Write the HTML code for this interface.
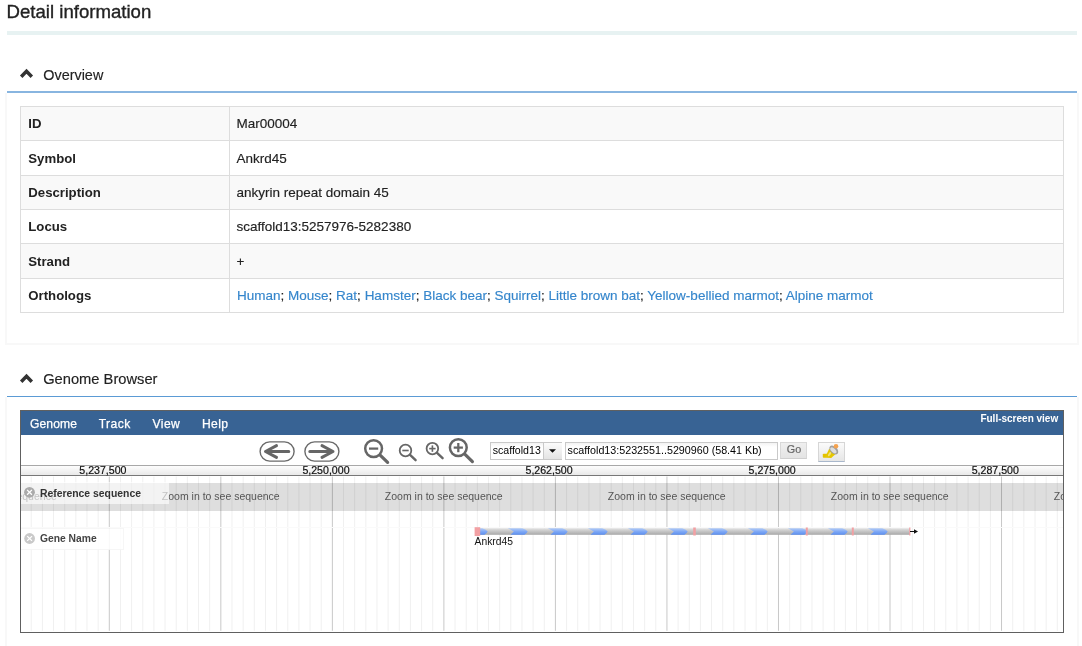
<!DOCTYPE html>
<html><head><meta charset="utf-8"><style>
html,body{margin:0;padding:0;background:#fff;width:1082px;height:646px;overflow:hidden;position:relative}
body{font-family:"Liberation Sans",sans-serif}
.t{position:absolute;white-space:pre}
.r{position:absolute}
</style></head><body>
<div class="t " style="left:6.60px;top:-0.70px;font-size:18.6px;line-height:25px;font-weight:400;color:#222;-webkit-text-stroke:0.35px #222">Detail information</div>
<div class="r" style="left:7px;top:31px;width:1070px;height:4px;background:#e7f2f2"></div>
<svg class="r" style="left:18.5px;top:67.4px" width="16" height="12" viewBox="0 0 16 12"><polyline points="2.2,9.8 7.5,4.3 12.8,9.8" fill="none" stroke="#333" stroke-width="3.4" stroke-linecap="butt" stroke-linejoin="miter"/></svg>
<div class="t " style="left:43.30px;top:66.30px;font-size:14.4px;line-height:19px;font-weight:400;color:#222;-webkit-text-stroke:0.15px #222">Overview</div>
<div class="r" style="left:7px;top:91px;width:1070px;height:2px;background:#88b5e0"></div>
<div class="r" style="left:5px;top:93px;width:2px;height:252px;background:#f8f8f8"></div>
<div class="r" style="left:1077px;top:93px;width:2px;height:252px;background:#f8f8f8"></div>
<div class="r" style="left:5px;top:343px;width:1074px;height:2px;background:#f8f8f8"></div>
<div class="r" style="left:20px;top:106px;width:1044px;height:34px;background:#f9f9f9"></div>
<div class="r" style="left:20px;top:106px;width:1044px;height:1px;background:#dddddd"></div>
<div class="t " style="left:28.30px;top:115.20px;font-size:13.2px;line-height:18px;font-weight:700;color:#222;">ID</div>
<div class="t " style="left:236.50px;top:115.30px;font-size:13.5px;line-height:18px;font-weight:400;color:#222;-webkit-text-stroke:0.15px #222">Mar00004</div>
<div class="r" style="left:20px;top:140px;width:1044px;height:1px;background:#dddddd"></div>
<div class="t " style="left:28.30px;top:149.53px;font-size:13.2px;line-height:18px;font-weight:700;color:#222;">Symbol</div>
<div class="t " style="left:236.50px;top:149.63px;font-size:13.5px;line-height:18px;font-weight:400;color:#222;-webkit-text-stroke:0.15px #222">Ankrd45</div>
<div class="r" style="left:20px;top:175px;width:1044px;height:34px;background:#f9f9f9"></div>
<div class="r" style="left:20px;top:175px;width:1044px;height:1px;background:#dddddd"></div>
<div class="t " style="left:28.30px;top:183.87px;font-size:13.2px;line-height:18px;font-weight:700;color:#222;">Description</div>
<div class="t " style="left:236.50px;top:183.97px;font-size:13.5px;line-height:18px;font-weight:400;color:#222;-webkit-text-stroke:0.15px #222">ankyrin repeat domain 45</div>
<div class="r" style="left:20px;top:209px;width:1044px;height:1px;background:#dddddd"></div>
<div class="t " style="left:28.30px;top:218.20px;font-size:13.2px;line-height:18px;font-weight:700;color:#222;">Locus</div>
<div class="t " style="left:236.50px;top:218.30px;font-size:13.5px;line-height:18px;font-weight:400;color:#222;-webkit-text-stroke:0.15px #222">scaffold13:5257976-5282380</div>
<div class="r" style="left:20px;top:243px;width:1044px;height:35px;background:#f9f9f9"></div>
<div class="r" style="left:20px;top:243px;width:1044px;height:1px;background:#dddddd"></div>
<div class="t " style="left:28.30px;top:252.53px;font-size:13.2px;line-height:18px;font-weight:700;color:#222;">Strand</div>
<div class="t " style="left:236.50px;top:252.63px;font-size:13.5px;line-height:18px;font-weight:400;color:#222;-webkit-text-stroke:0.15px #222">+</div>
<div class="r" style="left:20px;top:278px;width:1044px;height:1px;background:#dddddd"></div>
<div class="t " style="left:28.30px;top:286.87px;font-size:13.2px;line-height:18px;font-weight:700;color:#222;">Orthologs</div>
<div class="t " style="left:237.00px;top:286.97px;font-size:13.5px;line-height:18px;font-weight:400;color:#222;-webkit-text-stroke:0.15px currentColor"><span style="color:#3586cc;-webkit-text-stroke:0.15px #3586cc">Human</span>; <span style="color:#3586cc;-webkit-text-stroke:0.15px #3586cc">Mouse</span>; <span style="color:#3586cc;-webkit-text-stroke:0.15px #3586cc">Rat</span>; <span style="color:#3586cc;-webkit-text-stroke:0.15px #3586cc">Hamster</span>; <span style="color:#3586cc;-webkit-text-stroke:0.15px #3586cc">Black bear</span>; <span style="color:#3586cc;-webkit-text-stroke:0.15px #3586cc">Squirrel</span>; <span style="color:#3586cc;-webkit-text-stroke:0.15px #3586cc">Little brown bat</span>; <span style="color:#3586cc;-webkit-text-stroke:0.15px #3586cc">Yellow-bellied marmot</span>; <span style="color:#3586cc;-webkit-text-stroke:0.15px #3586cc">Alpine marmot</span></div>
<div class="r" style="left:20px;top:312px;width:1044px;height:1px;background:#dddddd"></div>
<div class="r" style="left:20px;top:106px;width:1px;height:207px;background:#dddddd"></div>
<div class="r" style="left:1063px;top:106px;width:1px;height:207px;background:#dddddd"></div>
<div class="r" style="left:229px;top:106px;width:1px;height:207px;background:#dddddd"></div>
<svg class="r" style="left:18.5px;top:371.9px" width="16" height="12" viewBox="0 0 16 12"><polyline points="2.2,9.8 7.5,4.3 12.8,9.8" fill="none" stroke="#333" stroke-width="3.4" stroke-linecap="butt" stroke-linejoin="miter"/></svg>
<div class="t " style="left:43.20px;top:369.10px;font-size:14.7px;line-height:20px;font-weight:400;color:#222;-webkit-text-stroke:0.15px #222">Genome Browser</div>
<div class="r" style="left:7px;top:396px;width:1070px;height:1px;background:#5b9bd5"></div>
<div class="r" style="left:5px;top:397px;width:2px;height:249px;background:#f8f8f8"></div>
<div class="r" style="left:1077px;top:397px;width:2px;height:249px;background:#f8f8f8"></div>
<div class="r" style="left:20px;top:410px;width:1042px;height:221px;border:1px solid #606060;background:#fff;overflow:hidden">
<div class="r" style="left:0px;top:0px;width:1042px;height:24px;background:#386394"></div>
<div class="t " style="left:9.00px;top:4.70px;font-size:12.1px;line-height:16px;font-weight:400;color:#fff;letter-spacing:0.1px;-webkit-text-stroke:0.25px #fff">Genome</div>
<div class="t " style="left:77.70px;top:4.70px;font-size:12.1px;line-height:16px;font-weight:400;color:#fff;letter-spacing:0.45px;-webkit-text-stroke:0.25px #fff">Track</div>
<div class="t " style="left:131.60px;top:4.70px;font-size:12.1px;line-height:16px;font-weight:400;color:#fff;letter-spacing:0.4px;-webkit-text-stroke:0.25px #fff">View</div>
<div class="t " style="left:181.00px;top:4.70px;font-size:12.1px;line-height:16px;font-weight:400;color:#fff;letter-spacing:0.35px;-webkit-text-stroke:0.25px #fff">Help</div>
<div class="t " style="left:959.40px;top:1.30px;font-size:10.0px;line-height:13px;font-weight:700;color:#fff;">Full-screen view</div>
<div class="r" style="left:0px;top:54px;width:1042px;height:11px;background:linear-gradient(#fdfdfd,#e9e9e9);border-top:1px solid #a8a8a8;border-bottom:1px solid #777;box-sizing:border-box"></div>
<div class="t " style="left:58.30px;top:52.00px;font-size:10.6px;line-height:14px;font-weight:400;color:#111;-webkit-text-stroke:0.2px #111">5,237,500</div>
<div class="t " style="left:281.40px;top:52.00px;font-size:10.6px;line-height:14px;font-weight:400;color:#111;-webkit-text-stroke:0.2px #111">5,250,000</div>
<div class="t " style="left:504.50px;top:52.00px;font-size:10.6px;line-height:14px;font-weight:400;color:#111;-webkit-text-stroke:0.2px #111">5,262,500</div>
<div class="t " style="left:727.60px;top:52.00px;font-size:10.6px;line-height:14px;font-weight:400;color:#111;-webkit-text-stroke:0.2px #111">5,275,000</div>
<div class="t " style="left:950.70px;top:52.00px;font-size:10.6px;line-height:14px;font-weight:400;color:#111;-webkit-text-stroke:0.2px #111">5,287,500</div>
<svg class="r" style="left:-21px;top:-411px;overflow:visible" width="1082" height="646"><rect x="260.09999999999997" y="441.9" width="34" height="19.2" rx="9.6" ry="9.6" fill="#fff" stroke="#6a6a6a" stroke-width="1.4"/><rect x="304.9" y="441.9" width="34" height="19.2" rx="9.6" ry="9.6" fill="#fff" stroke="#6a6a6a" stroke-width="1.4"/><path d="M288.8 451.5 H266 M276.5 445.6 L265.5 451.5 L276.5 457.4" fill="none" stroke="#666" stroke-width="3" stroke-linecap="round" stroke-linejoin="round"/><path d="M309.8 451.5 H332.5 M322 445.6 L333 451.5 L322 457.4" fill="none" stroke="#666" stroke-width="3" stroke-linecap="round" stroke-linejoin="round"/><circle cx="373.6" cy="448.6" r="8.4" fill="none" stroke="#666" stroke-width="2.5"/><line x1="380.12" y1="455.02" x2="387.6" y2="462.4" stroke="#666" stroke-width="3.2" stroke-linecap="round"/><line x1="369.0" y1="448.6" x2="378.20000000000005" y2="448.6" stroke="#666" stroke-width="2.25"/><circle cx="405.5" cy="450.5" r="5.8" fill="none" stroke="#666" stroke-width="1.8"/><line x1="410.07" y1="454.89" x2="415.6" y2="460.2" stroke="#666" stroke-width="2.4" stroke-linecap="round"/><line x1="402.3" y1="450.5" x2="408.7" y2="450.5" stroke="#666" stroke-width="1.62"/><circle cx="432.4" cy="448.6" r="5.8" fill="none" stroke="#666" stroke-width="1.8"/><line x1="437.02" y1="452.95" x2="442.6" y2="458.2" stroke="#666" stroke-width="2.4" stroke-linecap="round"/><line x1="429.2" y1="448.6" x2="435.59999999999997" y2="448.6" stroke="#666" stroke-width="1.62"/><line x1="432.4" y1="445.40000000000003" x2="432.4" y2="451.8" stroke="#666" stroke-width="1.62"/><circle cx="458.3" cy="447.6" r="8.4" fill="none" stroke="#666" stroke-width="2.5"/><line x1="464.79" y1="454.05" x2="472.4" y2="461.6" stroke="#666" stroke-width="3.2" stroke-linecap="round"/><line x1="453.7" y1="447.6" x2="462.90000000000003" y2="447.6" stroke="#666" stroke-width="2.25"/><line x1="458.3" y1="443.0" x2="458.3" y2="452.20000000000005" stroke="#666" stroke-width="2.25"/></svg>
<div class="r" style="left:469px;top:31px;width:72px;height:18px;box-sizing:border-box;border:1px solid #c9c9c9;background:linear-gradient(#f3f3f3,#fff 4px)"></div>
<div class="r" style="left:522px;top:32px;width:18px;height:16px;background:linear-gradient(#fcfcfc,#e4e4e4);border-left:1px solid #c9c9c9"></div>
<svg class="r" style="left:527px;top:37px" width="9" height="6"><path d="M1 1.2 H8 L4.5 4.8 Z" fill="#111"/></svg>
<div class="t " style="left:471.70px;top:32.00px;font-size:10.6px;line-height:14px;font-weight:400;color:#000;">scaffold13</div>
<div class="r" style="left:544px;top:31px;width:213px;height:18px;box-sizing:border-box;border:1px solid #c9c9c9;background:linear-gradient(#f3f3f3,#fff 4px)"></div>
<div class="t " style="left:546.60px;top:32.00px;font-size:10.72px;line-height:14px;font-weight:400;color:#000;">scaffold13:5232551..5290960 (58.41 Kb)</div>
<div class="r" style="left:759px;top:31px;width:27px;height:17px;box-sizing:border-box;border:1px solid #d8d8d8;border-bottom-color:#cfcfcf;background:linear-gradient(#efefef,#e4e4e4)"></div>
<div class="t " style="left:765.80px;top:31.10px;font-size:10.8px;line-height:15px;font-weight:400;color:#666;-webkit-text-stroke:0.2px #666">Go</div>
<div class="r" style="left:797px;top:31px;width:27px;height:20px;box-sizing:border-box;border:1px solid #d6d6d6;border-bottom-color:#a9b8cc;background:linear-gradient(#fbfbfb,#e6e6e6)"></div>
<svg class="r" style="left:-21px;top:-411px;overflow:visible" width="1082" height="646"><rect x="822.8" y="453.8" width="8.4" height="4" rx="0.8" fill="#e2c200"/><path d="M825.3 456.8 L829.2 448.8 L836.2 453.6 L831.2 458 Z" fill="#e5c700"/><ellipse cx="829.6" cy="454.2" rx="2.4" ry="1.1" transform="rotate(-55 829.6 454.2)" fill="#f2e07a"/><ellipse cx="833.8" cy="450" rx="5.3" ry="3.4" transform="rotate(45 833.8 450)" fill="#a0a0a0"/><ellipse cx="833.4" cy="450.4" rx="3.8" ry="2.0" transform="rotate(45 833.4 450.4)" fill="#dedede"/><ellipse cx="836" cy="446.3" rx="2.3" ry="2.3" fill="#f5a24e"/></svg>
<div class="r" style="left:0px;top:72px;width:1042px;height:27.6px;background:#dedede"></div>
<svg class="r" style="left:-21px;top:-411px;overflow:visible" width="1082" height="646"><line x1="31.23" y1="476.5" x2="31.23" y2="630.8" stroke="#f0f0f0" stroke-width="1" style="mix-blend-mode:multiply"/><line x1="42.38" y1="476.5" x2="42.38" y2="630.8" stroke="#f0f0f0" stroke-width="1" style="mix-blend-mode:multiply"/><line x1="53.53" y1="476.5" x2="53.53" y2="630.8" stroke="#f0f0f0" stroke-width="1" style="mix-blend-mode:multiply"/><line x1="64.69" y1="476.5" x2="64.69" y2="630.8" stroke="#f0f0f0" stroke-width="1" style="mix-blend-mode:multiply"/><line x1="75.84" y1="476.5" x2="75.84" y2="630.8" stroke="#f0f0f0" stroke-width="1" style="mix-blend-mode:multiply"/><line x1="86.99" y1="476.5" x2="86.99" y2="630.8" stroke="#f0f0f0" stroke-width="1" style="mix-blend-mode:multiply"/><line x1="98.15" y1="476.5" x2="98.15" y2="630.8" stroke="#f0f0f0" stroke-width="1" style="mix-blend-mode:multiply"/><line x1="109.30" y1="476.5" x2="109.30" y2="630.8" stroke="#c8c8c8" stroke-width="1" style="mix-blend-mode:multiply"/><line x1="120.45" y1="476.5" x2="120.45" y2="630.8" stroke="#f0f0f0" stroke-width="1" style="mix-blend-mode:multiply"/><line x1="131.61" y1="476.5" x2="131.61" y2="630.8" stroke="#f0f0f0" stroke-width="1" style="mix-blend-mode:multiply"/><line x1="142.76" y1="476.5" x2="142.76" y2="630.8" stroke="#f0f0f0" stroke-width="1" style="mix-blend-mode:multiply"/><line x1="153.91" y1="476.5" x2="153.91" y2="630.8" stroke="#f0f0f0" stroke-width="1" style="mix-blend-mode:multiply"/><line x1="165.06" y1="476.5" x2="165.06" y2="630.8" stroke="#f0f0f0" stroke-width="1" style="mix-blend-mode:multiply"/><line x1="176.22" y1="476.5" x2="176.22" y2="630.8" stroke="#f0f0f0" stroke-width="1" style="mix-blend-mode:multiply"/><line x1="187.37" y1="476.5" x2="187.37" y2="630.8" stroke="#f0f0f0" stroke-width="1" style="mix-blend-mode:multiply"/><line x1="198.52" y1="476.5" x2="198.52" y2="630.8" stroke="#f0f0f0" stroke-width="1" style="mix-blend-mode:multiply"/><line x1="209.68" y1="476.5" x2="209.68" y2="630.8" stroke="#f0f0f0" stroke-width="1" style="mix-blend-mode:multiply"/><line x1="220.83" y1="476.5" x2="220.83" y2="630.8" stroke="#c8c8c8" stroke-width="1" style="mix-blend-mode:multiply"/><line x1="231.98" y1="476.5" x2="231.98" y2="630.8" stroke="#f0f0f0" stroke-width="1" style="mix-blend-mode:multiply"/><line x1="243.14" y1="476.5" x2="243.14" y2="630.8" stroke="#f0f0f0" stroke-width="1" style="mix-blend-mode:multiply"/><line x1="254.29" y1="476.5" x2="254.29" y2="630.8" stroke="#f0f0f0" stroke-width="1" style="mix-blend-mode:multiply"/><line x1="265.44" y1="476.5" x2="265.44" y2="630.8" stroke="#f0f0f0" stroke-width="1" style="mix-blend-mode:multiply"/><line x1="276.60" y1="476.5" x2="276.60" y2="630.8" stroke="#f0f0f0" stroke-width="1" style="mix-blend-mode:multiply"/><line x1="287.75" y1="476.5" x2="287.75" y2="630.8" stroke="#f0f0f0" stroke-width="1" style="mix-blend-mode:multiply"/><line x1="298.90" y1="476.5" x2="298.90" y2="630.8" stroke="#f0f0f0" stroke-width="1" style="mix-blend-mode:multiply"/><line x1="310.05" y1="476.5" x2="310.05" y2="630.8" stroke="#f0f0f0" stroke-width="1" style="mix-blend-mode:multiply"/><line x1="321.21" y1="476.5" x2="321.21" y2="630.8" stroke="#f0f0f0" stroke-width="1" style="mix-blend-mode:multiply"/><line x1="332.36" y1="476.5" x2="332.36" y2="630.8" stroke="#c8c8c8" stroke-width="1" style="mix-blend-mode:multiply"/><line x1="343.51" y1="476.5" x2="343.51" y2="630.8" stroke="#f0f0f0" stroke-width="1" style="mix-blend-mode:multiply"/><line x1="354.67" y1="476.5" x2="354.67" y2="630.8" stroke="#f0f0f0" stroke-width="1" style="mix-blend-mode:multiply"/><line x1="365.82" y1="476.5" x2="365.82" y2="630.8" stroke="#f0f0f0" stroke-width="1" style="mix-blend-mode:multiply"/><line x1="376.97" y1="476.5" x2="376.97" y2="630.8" stroke="#f0f0f0" stroke-width="1" style="mix-blend-mode:multiply"/><line x1="388.12" y1="476.5" x2="388.12" y2="630.8" stroke="#f0f0f0" stroke-width="1" style="mix-blend-mode:multiply"/><line x1="399.28" y1="476.5" x2="399.28" y2="630.8" stroke="#f0f0f0" stroke-width="1" style="mix-blend-mode:multiply"/><line x1="410.43" y1="476.5" x2="410.43" y2="630.8" stroke="#f0f0f0" stroke-width="1" style="mix-blend-mode:multiply"/><line x1="421.58" y1="476.5" x2="421.58" y2="630.8" stroke="#f0f0f0" stroke-width="1" style="mix-blend-mode:multiply"/><line x1="432.74" y1="476.5" x2="432.74" y2="630.8" stroke="#f0f0f0" stroke-width="1" style="mix-blend-mode:multiply"/><line x1="443.89" y1="476.5" x2="443.89" y2="630.8" stroke="#c8c8c8" stroke-width="1" style="mix-blend-mode:multiply"/><line x1="455.04" y1="476.5" x2="455.04" y2="630.8" stroke="#f0f0f0" stroke-width="1" style="mix-blend-mode:multiply"/><line x1="466.20" y1="476.5" x2="466.20" y2="630.8" stroke="#f0f0f0" stroke-width="1" style="mix-blend-mode:multiply"/><line x1="477.35" y1="476.5" x2="477.35" y2="630.8" stroke="#f0f0f0" stroke-width="1" style="mix-blend-mode:multiply"/><line x1="488.50" y1="476.5" x2="488.50" y2="630.8" stroke="#f0f0f0" stroke-width="1" style="mix-blend-mode:multiply"/><line x1="499.66" y1="476.5" x2="499.66" y2="630.8" stroke="#f0f0f0" stroke-width="1" style="mix-blend-mode:multiply"/><line x1="510.81" y1="476.5" x2="510.81" y2="630.8" stroke="#f0f0f0" stroke-width="1" style="mix-blend-mode:multiply"/><line x1="521.96" y1="476.5" x2="521.96" y2="630.8" stroke="#f0f0f0" stroke-width="1" style="mix-blend-mode:multiply"/><line x1="533.11" y1="476.5" x2="533.11" y2="630.8" stroke="#f0f0f0" stroke-width="1" style="mix-blend-mode:multiply"/><line x1="544.27" y1="476.5" x2="544.27" y2="630.8" stroke="#f0f0f0" stroke-width="1" style="mix-blend-mode:multiply"/><line x1="555.42" y1="476.5" x2="555.42" y2="630.8" stroke="#c8c8c8" stroke-width="1" style="mix-blend-mode:multiply"/><line x1="566.57" y1="476.5" x2="566.57" y2="630.8" stroke="#f0f0f0" stroke-width="1" style="mix-blend-mode:multiply"/><line x1="577.73" y1="476.5" x2="577.73" y2="630.8" stroke="#f0f0f0" stroke-width="1" style="mix-blend-mode:multiply"/><line x1="588.88" y1="476.5" x2="588.88" y2="630.8" stroke="#f0f0f0" stroke-width="1" style="mix-blend-mode:multiply"/><line x1="600.03" y1="476.5" x2="600.03" y2="630.8" stroke="#f0f0f0" stroke-width="1" style="mix-blend-mode:multiply"/><line x1="611.19" y1="476.5" x2="611.19" y2="630.8" stroke="#f0f0f0" stroke-width="1" style="mix-blend-mode:multiply"/><line x1="622.34" y1="476.5" x2="622.34" y2="630.8" stroke="#f0f0f0" stroke-width="1" style="mix-blend-mode:multiply"/><line x1="633.49" y1="476.5" x2="633.49" y2="630.8" stroke="#f0f0f0" stroke-width="1" style="mix-blend-mode:multiply"/><line x1="644.64" y1="476.5" x2="644.64" y2="630.8" stroke="#f0f0f0" stroke-width="1" style="mix-blend-mode:multiply"/><line x1="655.80" y1="476.5" x2="655.80" y2="630.8" stroke="#f0f0f0" stroke-width="1" style="mix-blend-mode:multiply"/><line x1="666.95" y1="476.5" x2="666.95" y2="630.8" stroke="#c8c8c8" stroke-width="1" style="mix-blend-mode:multiply"/><line x1="678.10" y1="476.5" x2="678.10" y2="630.8" stroke="#f0f0f0" stroke-width="1" style="mix-blend-mode:multiply"/><line x1="689.26" y1="476.5" x2="689.26" y2="630.8" stroke="#f0f0f0" stroke-width="1" style="mix-blend-mode:multiply"/><line x1="700.41" y1="476.5" x2="700.41" y2="630.8" stroke="#f0f0f0" stroke-width="1" style="mix-blend-mode:multiply"/><line x1="711.56" y1="476.5" x2="711.56" y2="630.8" stroke="#f0f0f0" stroke-width="1" style="mix-blend-mode:multiply"/><line x1="722.72" y1="476.5" x2="722.72" y2="630.8" stroke="#f0f0f0" stroke-width="1" style="mix-blend-mode:multiply"/><line x1="733.87" y1="476.5" x2="733.87" y2="630.8" stroke="#f0f0f0" stroke-width="1" style="mix-blend-mode:multiply"/><line x1="745.02" y1="476.5" x2="745.02" y2="630.8" stroke="#f0f0f0" stroke-width="1" style="mix-blend-mode:multiply"/><line x1="756.17" y1="476.5" x2="756.17" y2="630.8" stroke="#f0f0f0" stroke-width="1" style="mix-blend-mode:multiply"/><line x1="767.33" y1="476.5" x2="767.33" y2="630.8" stroke="#f0f0f0" stroke-width="1" style="mix-blend-mode:multiply"/><line x1="778.48" y1="476.5" x2="778.48" y2="630.8" stroke="#c8c8c8" stroke-width="1" style="mix-blend-mode:multiply"/><line x1="789.63" y1="476.5" x2="789.63" y2="630.8" stroke="#f0f0f0" stroke-width="1" style="mix-blend-mode:multiply"/><line x1="800.79" y1="476.5" x2="800.79" y2="630.8" stroke="#f0f0f0" stroke-width="1" style="mix-blend-mode:multiply"/><line x1="811.94" y1="476.5" x2="811.94" y2="630.8" stroke="#f0f0f0" stroke-width="1" style="mix-blend-mode:multiply"/><line x1="823.09" y1="476.5" x2="823.09" y2="630.8" stroke="#f0f0f0" stroke-width="1" style="mix-blend-mode:multiply"/><line x1="834.25" y1="476.5" x2="834.25" y2="630.8" stroke="#f0f0f0" stroke-width="1" style="mix-blend-mode:multiply"/><line x1="845.40" y1="476.5" x2="845.40" y2="630.8" stroke="#f0f0f0" stroke-width="1" style="mix-blend-mode:multiply"/><line x1="856.55" y1="476.5" x2="856.55" y2="630.8" stroke="#f0f0f0" stroke-width="1" style="mix-blend-mode:multiply"/><line x1="867.70" y1="476.5" x2="867.70" y2="630.8" stroke="#f0f0f0" stroke-width="1" style="mix-blend-mode:multiply"/><line x1="878.86" y1="476.5" x2="878.86" y2="630.8" stroke="#f0f0f0" stroke-width="1" style="mix-blend-mode:multiply"/><line x1="890.01" y1="476.5" x2="890.01" y2="630.8" stroke="#c8c8c8" stroke-width="1" style="mix-blend-mode:multiply"/><line x1="901.16" y1="476.5" x2="901.16" y2="630.8" stroke="#f0f0f0" stroke-width="1" style="mix-blend-mode:multiply"/><line x1="912.32" y1="476.5" x2="912.32" y2="630.8" stroke="#f0f0f0" stroke-width="1" style="mix-blend-mode:multiply"/><line x1="923.47" y1="476.5" x2="923.47" y2="630.8" stroke="#f0f0f0" stroke-width="1" style="mix-blend-mode:multiply"/><line x1="934.62" y1="476.5" x2="934.62" y2="630.8" stroke="#f0f0f0" stroke-width="1" style="mix-blend-mode:multiply"/><line x1="945.77" y1="476.5" x2="945.77" y2="630.8" stroke="#f0f0f0" stroke-width="1" style="mix-blend-mode:multiply"/><line x1="956.93" y1="476.5" x2="956.93" y2="630.8" stroke="#f0f0f0" stroke-width="1" style="mix-blend-mode:multiply"/><line x1="968.08" y1="476.5" x2="968.08" y2="630.8" stroke="#f0f0f0" stroke-width="1" style="mix-blend-mode:multiply"/><line x1="979.23" y1="476.5" x2="979.23" y2="630.8" stroke="#f0f0f0" stroke-width="1" style="mix-blend-mode:multiply"/><line x1="990.39" y1="476.5" x2="990.39" y2="630.8" stroke="#f0f0f0" stroke-width="1" style="mix-blend-mode:multiply"/><line x1="1001.54" y1="476.5" x2="1001.54" y2="630.8" stroke="#c8c8c8" stroke-width="1" style="mix-blend-mode:multiply"/><line x1="1012.69" y1="476.5" x2="1012.69" y2="630.8" stroke="#f0f0f0" stroke-width="1" style="mix-blend-mode:multiply"/><line x1="1023.85" y1="476.5" x2="1023.85" y2="630.8" stroke="#f0f0f0" stroke-width="1" style="mix-blend-mode:multiply"/><line x1="1035.00" y1="476.5" x2="1035.00" y2="630.8" stroke="#f0f0f0" stroke-width="1" style="mix-blend-mode:multiply"/><line x1="1046.15" y1="476.5" x2="1046.15" y2="630.8" stroke="#f0f0f0" stroke-width="1" style="mix-blend-mode:multiply"/><line x1="1057.31" y1="476.5" x2="1057.31" y2="630.8" stroke="#f0f0f0" stroke-width="1" style="mix-blend-mode:multiply"/></svg>
<div class="r" style="left:0px;top:116px;width:1042px;height:1px;background:#fafafa"></div>
<div class="t " style="left:-305.20px;top:77.70px;font-size:10.5px;line-height:14px;font-weight:400;color:#555;">Zoom in to see sequence</div>
<div class="t " style="left:-82.20px;top:77.70px;font-size:10.5px;line-height:14px;font-weight:400;color:#555;">Zoom in to see sequence</div>
<div class="t " style="left:140.80px;top:77.70px;font-size:10.5px;line-height:14px;font-weight:400;color:#555;">Zoom in to see sequence</div>
<div class="t " style="left:363.80px;top:77.70px;font-size:10.5px;line-height:14px;font-weight:400;color:#555;">Zoom in to see sequence</div>
<div class="t " style="left:586.80px;top:77.70px;font-size:10.5px;line-height:14px;font-weight:400;color:#555;">Zoom in to see sequence</div>
<div class="t " style="left:809.80px;top:77.70px;font-size:10.5px;line-height:14px;font-weight:400;color:#555;">Zoom in to see sequence</div>
<div class="t " style="left:1032.80px;top:77.70px;font-size:10.5px;line-height:14px;font-weight:400;color:#555;">Zoom in to see sequence</div>
<div class="r" style="left:0px;top:71px;width:148px;height:21.5px;background:rgba(255,255,255,0.64)"></div>
<div class="t " style="left:18.90px;top:76.10px;font-size:10.4px;line-height:14px;font-weight:700;color:#333;">Reference sequence</div>
<div class="r" style="left:0px;top:117px;width:103px;height:21.5px;box-sizing:border-box;background:rgba(255,255,255,0.85);border:1px solid rgba(0,0,0,0.035);border-left:none"></div>
<div class="t " style="left:19.00px;top:121.30px;font-size:10.3px;line-height:14px;font-weight:700;color:#444;">Gene Name</div>
<svg class="r" style="left:-21px;top:-411px;overflow:visible" width="1082" height="646"><circle cx="29.5" cy="492.3" r="5.4" fill="#aaaaaa"/><path d="M27.1 489.90000000000003 L31.9 494.7 M31.9 489.90000000000003 L27.1 494.7" stroke="#fff" stroke-width="1.3"/><circle cx="29.6" cy="538.5" r="5.4" fill="#c9c9c9"/><path d="M27.200000000000003 536.1 L32.0 540.9 M32.0 536.1 L27.200000000000003 540.9" stroke="#fff" stroke-width="1.3"/></svg>
<svg class="r" style="left:-21px;top:-411px;overflow:visible" width="1082" height="646"><defs><linearGradient id="gb" x1="0" y1="0" x2="0" y2="1"><stop offset="0" stop-color="#e4e4e4"/><stop offset="0.5" stop-color="#c4c4c4"/><stop offset="1" stop-color="#a8a8a8"/></linearGradient><linearGradient id="bl" x1="0" y1="0" x2="0" y2="1"><stop offset="0" stop-color="#b4cdf8"/><stop offset="0.5" stop-color="#7fa8f4"/><stop offset="1" stop-color="#5a8ef0"/></linearGradient></defs><clipPath id="cp"><rect x="480" y="520" width="430" height="20"/></clipPath><rect x="480" y="528.2" width="430" height="6.6" fill="url(#gb)"/><g clip-path="url(#cp)"><path d="M467.8 528.2 L482.2 528.2 Q486.5 529.6 487.7 531.5 Q486.8 533.6 484.4 534.8 L470.5 534.8 L473.9 531.5 Z" fill="url(#bl)"/><path d="M507.8 528.2 L522.2 528.2 Q526.5 529.6 527.7 531.5 Q526.8 533.6 524.4 534.8 L510.5 534.8 L513.9 531.5 Z" fill="url(#bl)"/><path d="M547.8 528.2 L562.2 528.2 Q566.5 529.6 567.7 531.5 Q566.8 533.6 564.4 534.8 L550.5 534.8 L553.9 531.5 Z" fill="url(#bl)"/><path d="M587.8 528.2 L602.2 528.2 Q606.5 529.6 607.7 531.5 Q606.8 533.6 604.4 534.8 L590.5 534.8 L593.9 531.5 Z" fill="url(#bl)"/><path d="M627.8 528.2 L642.2 528.2 Q646.5 529.6 647.7 531.5 Q646.8 533.6 644.4 534.8 L630.5 534.8 L633.9 531.5 Z" fill="url(#bl)"/><path d="M667.8 528.2 L682.2 528.2 Q686.5 529.6 687.7 531.5 Q686.8 533.6 684.4 534.8 L670.5 534.8 L673.9 531.5 Z" fill="url(#bl)"/><path d="M707.8 528.2 L722.2 528.2 Q726.5 529.6 727.7 531.5 Q726.8 533.6 724.4 534.8 L710.5 534.8 L713.9 531.5 Z" fill="url(#bl)"/><path d="M747.8 528.2 L762.2 528.2 Q766.5 529.6 767.7 531.5 Q766.8 533.6 764.4 534.8 L750.5 534.8 L753.9 531.5 Z" fill="url(#bl)"/><path d="M787.8 528.2 L802.2 528.2 Q806.5 529.6 807.7 531.5 Q806.8 533.6 804.4 534.8 L790.5 534.8 L793.9 531.5 Z" fill="url(#bl)"/><path d="M827.8 528.2 L842.2 528.2 Q846.5 529.6 847.7 531.5 Q846.8 533.6 844.4 534.8 L830.5 534.8 L833.9 531.5 Z" fill="url(#bl)"/><path d="M867.8 528.2 L882.2 528.2 Q886.5 529.6 887.7 531.5 Q886.8 533.6 884.4 534.8 L870.5 534.8 L873.9 531.5 Z" fill="url(#bl)"/></g><rect x="474.6" y="527.2" width="5.6" height="8.8" fill="#f2a0a3"/><rect x="693.2" y="527.5" width="2.6" height="8" fill="#f2a0a3"/><rect x="805.8" y="527.5" width="2" height="8" fill="#f2a0a3"/><rect x="851.8" y="527.5" width="2" height="8" fill="#f2a0a3"/><rect x="909.2" y="527.5" width="1.2" height="8" fill="#f2a0a3"/><path d="M910 531.5 H915" stroke="#111" stroke-width="1"/><path d="M914 529.3 L918 531.5 L914 533.7 Z" fill="#111"/></svg>
<div class="t " style="left:453.60px;top:123.90px;font-size:10.3px;line-height:14px;font-weight:400;color:#111;">Ankrd45</div>
</div>
</body></html>
